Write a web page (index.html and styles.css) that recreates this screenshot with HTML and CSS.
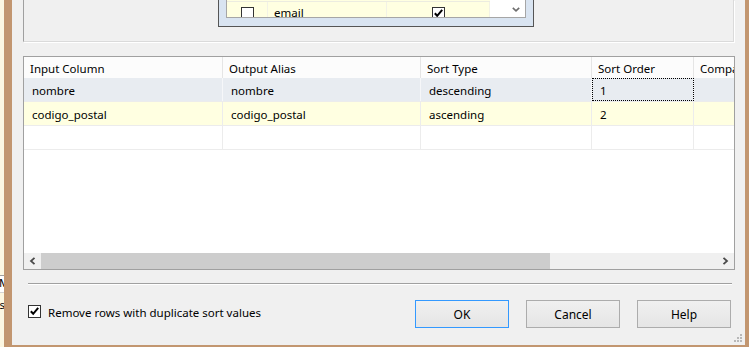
FILE: index.html
```html
<!DOCTYPE html>
<html lang="en">
<head>
    <meta charset="UTF-8">
    <meta name="viewport" content="width=device-width, initial-scale=1.0">
    <title>Sort Transformation Editor</title>
    <link rel="stylesheet" href="styles.css">
</head>
<body>
    <div class="desktop">
        <div class="behind">
            <div class="behind-box">Ma</div>
            <div class="behind-text">as</div>
        </div>

        <div class="dialog">
            <!-- available input columns -->
            <div class="top-panel">
                <div class="list-frame">
                    <div class="list-box">
                        <div class="list-rows">
                            <div class="list-row-prev"></div>
                            <div class="list-row">
                                <div class="lc lc-sel"><span class="checkbox"></span></div>
                                <div class="lc lc-name">email</div>
                                <div class="lc lc-pass">
                                    <span class="checkbox">
                                        <svg width="11" height="11" viewBox="0 0 11 11"><polyline points="1.8,5.2 4.2,7.8 9.2,1.8" fill="none" stroke="#000" stroke-width="2"/></svg>
                                    </span>
                                </div>
                            </div>
                        </div>
                        <div class="list-scroll">
                            <svg class="chev-down" width="8" height="5" viewBox="0 0 8 5"><polyline points="0.8,0.8 4,3.8 7.2,0.8" fill="none" stroke="#6d6d6d" stroke-width="1.6"/></svg>
                        </div>
                    </div>
                </div>
            </div>

            <!-- sort columns -->
            <div class="grid">
                <div class="grid-row grid-head">
                    <div class="cell c1">Input Column</div>
                    <div class="cell c2">Output Alias</div>
                    <div class="cell c3">Sort Type</div>
                    <div class="cell c4">Sort Order</div>
                    <div class="cell c5">Comparison Flags</div>
                </div>
                <div class="grid-row row-current">
                    <div class="cell c1">nombre</div>
                    <div class="cell c2">nombre</div>
                    <div class="cell c3">descending</div>
                    <div class="cell c4 focused">1</div>
                    <div class="cell c5"></div>
                </div>
                <div class="grid-row row-alt">
                    <div class="cell c1">codigo_postal</div>
                    <div class="cell c2">codigo_postal</div>
                    <div class="cell c3">ascending</div>
                    <div class="cell c4">2</div>
                    <div class="cell c5"></div>
                </div>
                <div class="grid-row">
                    <div class="cell c1"></div>
                    <div class="cell c2"></div>
                    <div class="cell c3"></div>
                    <div class="cell c4"></div>
                    <div class="cell c5"></div>
                </div>
                <div class="grid-empty"></div>
                <div class="hscroll">
                    <div class="sb-btn">
                        <svg width="7" height="8" viewBox="0 0 7 8"><polyline points="5.5,0.8 2,4 5.5,7.2" fill="none" stroke="#4a4a4a" stroke-width="1.8"/></svg>
                    </div>
                    <div class="sb-thumb"></div>
                    <div class="sb-track"></div>
                    <div class="sb-btn">
                        <svg width="7" height="8" viewBox="0 0 7 8"><polyline points="1.5,0.8 5,4 1.5,7.2" fill="none" stroke="#4a4a4a" stroke-width="1.8"/></svg>
                    </div>
                </div>
            </div>

            <div class="separator"></div>

            <div class="actions">
                <label class="option">
                    <span class="checkbox">
                        <svg width="11" height="11" viewBox="0 0 11 11"><polyline points="1.8,5.2 4.2,7.8 9.2,1.8" fill="none" stroke="#000" stroke-width="2"/></svg>
                    </span>
                    <span class="option-text">Remove rows with duplicate sort values</span>
                </label>
                <div class="buttons">
                    <button class="btn btn-default">OK</button>
                    <button class="btn">Cancel</button>
                    <button class="btn">Help</button>
                </div>
            </div>

            <svg class="grip" width="9" height="9" viewBox="0 0 9 9">
                <rect x="6" y="0" width="2" height="2" fill="#b8b8b8"/>
                <rect x="3" y="3" width="2" height="2" fill="#b8b8b8"/>
                <rect x="6" y="3" width="2" height="2" fill="#b8b8b8"/>
                <rect x="0" y="6" width="2" height="2" fill="#b8b8b8"/>
                <rect x="3" y="6" width="2" height="2" fill="#b8b8b8"/>
                <rect x="6" y="6" width="2" height="2" fill="#b8b8b8"/>
            </svg>
        </div>
    </div>
</body>
</html>
```

FILE: styles.css
```css
* {
    box-sizing: border-box;
}
body {
    margin: 0;
    width: 749px;
    height: 347px;
    overflow: hidden;
    font-family: 'Noto Sans', 'Segoe UI', sans-serif;
    font-size: 11.5px;
    color: #000;
    background-color: #fcf7e2;
}
.desktop {
    display: flex;
    height: 347px;
}
.behind {
    width: 4px;
    overflow: hidden;
    padding-top: 275px;
    white-space: nowrap;
}
.behind-box {
    height: 18px;
    margin-left: -1px;
    border-top: 1px solid #a0a0a0;
    border-bottom: 1px solid #d4d4d4;
    background-color: #fff;
    line-height: 14px;
}
.behind-text {
    margin-top: 4px;
    margin-left: -7px;
    line-height: 16px;
}
.dialog {
    position: relative;
    flex: 1;
    display: flex;
    flex-direction: column;
    background-color: #f0f0f0;
    border-left: 8px solid #c29670;
    border-right: 4px solid #c29670;
    border-bottom: 2px solid #c29670;
    padding: 0 10px 0 11px;
}

/* top panel */
.top-panel {
    width: 711px;
    height: 42px;
    padding-left: 194px;
    border-left: 1px solid #a0a0a0;
    border-right: 1px solid #dadada;
    border-bottom: 1px solid #dadada;
    box-shadow: 1px 1px 0 #fff;
}
.list-frame {
    width: 316px;
    height: 27px;
    padding: 0 7px 8px 7px;
    background-color: #d9e4f1;
    border: 1px solid #555;
    border-top: none;
}
.list-box {
    display: flex;
    height: 18px;
    background-color: #fff;
    border: 1px solid #a6a6a6;
    border-top: none;
    overflow: hidden;
}
.list-rows {
    width: 263px;
    background-color: #ffffe1;
}
.list-row-prev {
    height: 2px;
    border-bottom: 1px solid #ecece0;
}
.list-row {
    display: flex;
    height: 20px;
}
.lc {
    border-right: 1px solid #f2f2e6;
    padding-top: 3px;
    line-height: 16px;
}
.lc-sel {
    width: 41px;
    padding-left: 14px;
    padding-top: 5px;
}
.lc-name {
    width: 119px;
    padding-left: 6px;
}
.lc-pass {
    width: 103px;
    padding-left: 45px;
    padding-top: 5px;
}
.list-scroll {
    flex: 1;
    background-color: #fff;
    padding: 7px 0 0 22px;
}
.chev-down {
    display: block;
}
.checkbox {
    display: block;
    flex: none;
    width: 13px;
    height: 13px;
    border: 1px solid #333;
    background-color: #fff;
}
.checkbox svg {
    display: block;
}

/* sort grid */
.grid {
    display: flex;
    flex-direction: column;
    width: 712px;
    height: 214px;
    margin-top: 14px;
    background-color: #fff;
    border: 1px solid #a0a0a0;
}
.grid-row {
    display: flex;
    height: 24px;
    border-bottom: 1px solid #ececec;
}
.grid-head {
    height: 21px;
    border-bottom: none;
    background-color: #fcfcfc;
}
.row-current {
    background-color: #e8ecf1;
}
.row-alt {
    background-color: #ffffe1;
}
.cell {
    padding: 2px 0 0 8px;
    line-height: 21px;
    white-space: nowrap;
    overflow: hidden;
    border-right: 1px solid #ececec;
}
.grid-head .cell {
    padding-left: 6px;
    line-height: 19px;
    border-right-color: #e5e5e5;
}
.row-current .cell {
    border-right-color: #f6f7f9;
}
.c1 { width: 199px; }
.c2 { width: 198px; }
.c3 { width: 171px; }
.c4 { width: 102px; }
.c5 {
    flex: 1;
    border-right: none;
}
.focused {
    outline: 1px dotted #000;
    outline-offset: -1px;
}
.grid-empty {
    flex: 1;
}
.hscroll {
    display: flex;
    height: 16px;
    background-color: #f0f0f0;
}
.sb-btn {
    width: 17px;
    display: flex;
    align-items: center;
    justify-content: center;
}
.sb-thumb {
    width: 509px;
    background-color: #cdcdcd;
}
.sb-track {
    flex: 1;
}

.separator {
    width: 704px;
    margin: 13px 0 0 5px;
    border-top: 1px solid #a0a0a0;
    border-bottom: 1px solid #fff;
}

/* bottom */
.actions {
    display: flex;
    align-items: center;
    margin-top: 15px;
    padding: 0 4px 0 5px;
}
.option {
    display: flex;
    align-items: center;
    gap: 7px;
    margin-bottom: 5px;
}
.option-text {
    padding-top: 2px;
}
.buttons {
    display: flex;
    gap: 17px;
    margin-left: auto;
}
.btn {
    width: 94px;
    height: 28px;
    padding: 1px 0 0;
    font-family: inherit;
    font-size: 12px;
    color: #000;
    border: 1px solid #acacac;
    background: linear-gradient(#f0f0f0, #e5e5e5);
}
.btn-default {
    border-color: #3399ff;
}
.grip {
    position: absolute;
    right: 2px;
    bottom: 2px;
}
```
